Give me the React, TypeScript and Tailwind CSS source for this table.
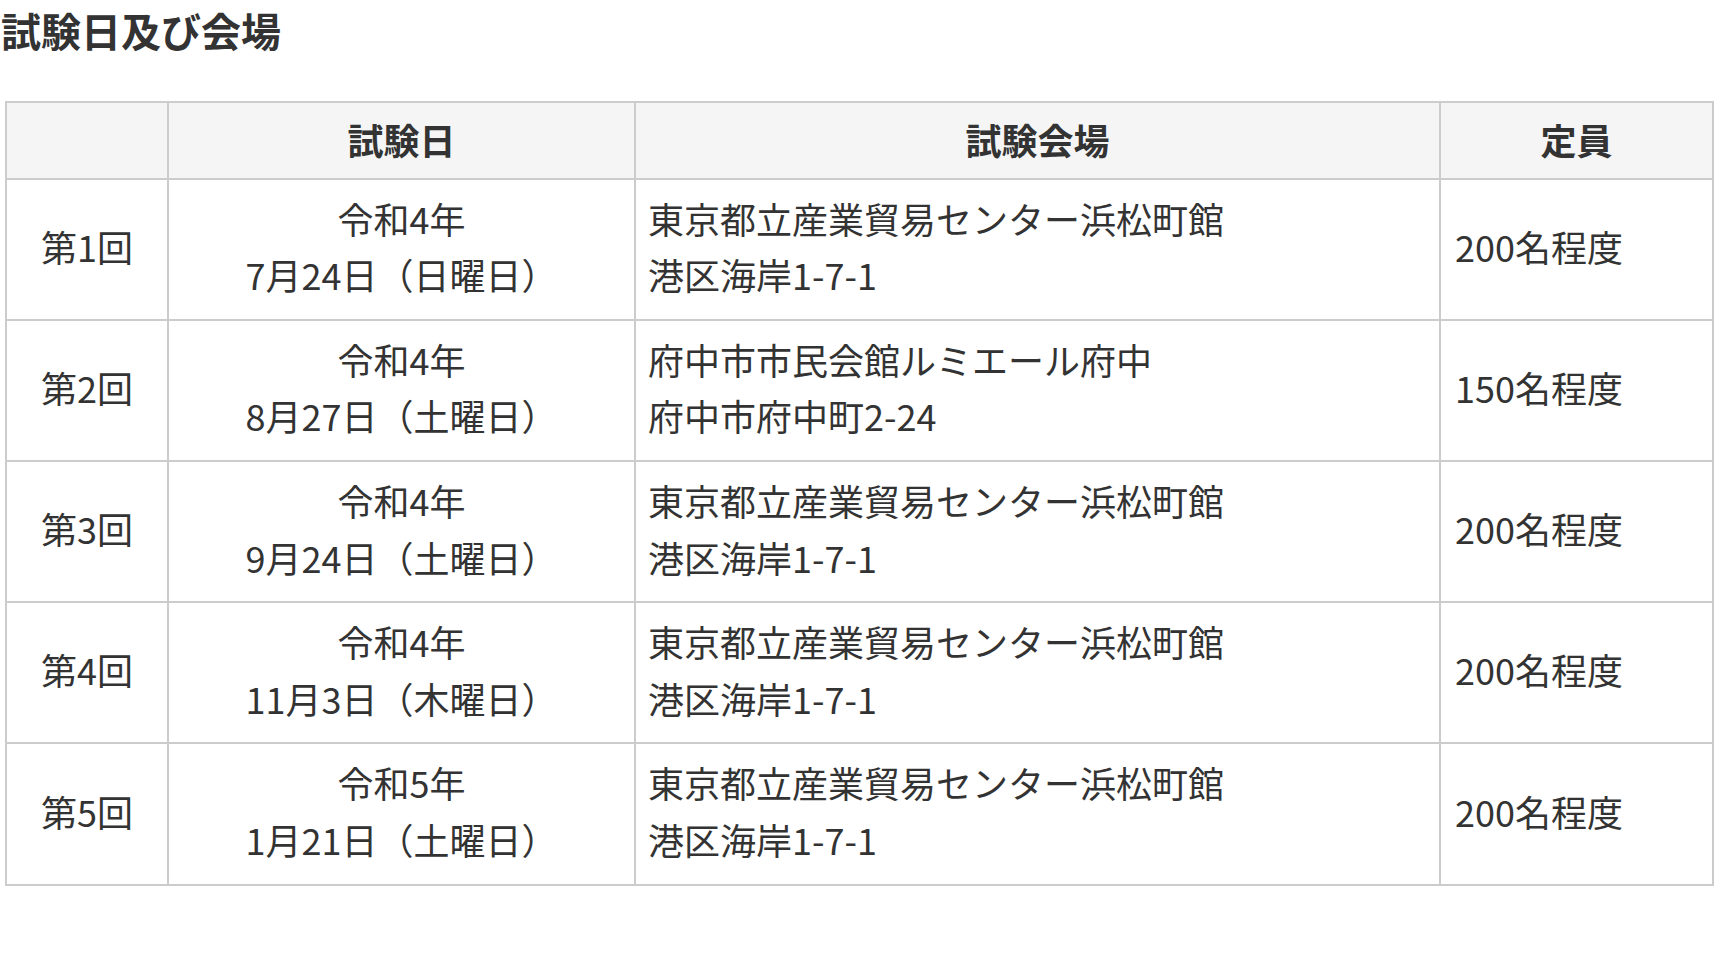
const rows = [
  {
    no: "第1回",
    year: "令和4年",
    date: "7月24日（日曜日）",
    venue: "東京都立産業貿易センター浜松町館",
    address: "港区海岸1-7-1",
    capacity: "200名程度",
  },
  {
    no: "第2回",
    year: "令和4年",
    date: "8月27日（土曜日）",
    venue: "府中市市民会館ルミエール府中",
    address: "府中市府中町2-24",
    capacity: "150名程度",
  },
  {
    no: "第3回",
    year: "令和4年",
    date: "9月24日（土曜日）",
    venue: "東京都立産業貿易センター浜松町館",
    address: "港区海岸1-7-1",
    capacity: "200名程度",
  },
  {
    no: "第4回",
    year: "令和4年",
    date: "11月3日（木曜日）",
    venue: "東京都立産業貿易センター浜松町館",
    address: "港区海岸1-7-1",
    capacity: "200名程度",
  },
  {
    no: "第5回",
    year: "令和5年",
    date: "1月21日（土曜日）",
    venue: "東京都立産業貿易センター浜松町館",
    address: "港区海岸1-7-1",
    capacity: "200名程度",
  },
];

export default function App() {
  return (
    <div className="min-h-screen bg-white text-[#333333] font-['Noto_Sans_CJK_JP','Noto_Sans',sans-serif]">
      <h2 className="pl-[1px] text-[40px] font-bold leading-[60px] mb-[41px]">試験日及び会場</h2>
      <table className="ml-[5px] w-[1707px] table-fixed border-collapse border-2 border-[#cccccc] text-[36px] leading-[56.6px]">
        <colgroup>
          <col className="w-[162px]" />
          <col className="w-[467px]" />
          <col className="w-[805px]" />
          <col className="w-[273px]" />
        </colgroup>
        <thead>
          <tr className="bg-[#f5f5f5]">
            <th className="border-2 border-[#cccccc] pt-[8px] pb-[10px]"></th>
            <th className="border-2 border-[#cccccc] pt-[8px] pb-[10px] text-center font-bold">試験日</th>
            <th className="border-2 border-[#cccccc] pt-[8px] pb-[10px] text-center font-bold">試験会場</th>
            <th className="border-2 border-[#cccccc] pt-[8px] pb-[10px] text-center font-bold">定員</th>
          </tr>
        </thead>
        <tbody>
          {rows.map((r) => (
            <tr key={r.no}>
              <td className="border-2 border-[#cccccc] px-[12px] pt-[10px] pb-[16px] text-center align-middle">{r.no}</td>
              <td className="border-2 border-[#cccccc] px-[12px] pt-[10px] pb-[16px] text-center align-middle">
                {r.year}
                <br />
                {r.date}
              </td>
              <td className="border-2 border-[#cccccc] px-[12px] pt-[10px] pb-[16px] text-left align-middle">
                {r.venue}
                <br />
                {r.address}
              </td>
              <td className="border-2 border-[#cccccc] px-[14px] pt-[10px] pb-[16px] text-left align-middle">{r.capacity}</td>
            </tr>
          ))}
        </tbody>
      </table>
    </div>
  );
}
